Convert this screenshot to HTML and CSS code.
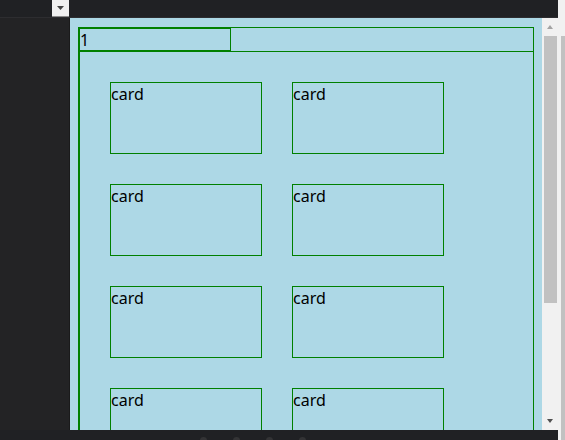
FILE: index.html
```html
<!DOCTYPE html>
<html lang="en">
<head>
    <meta charset="UTF-8">
    <meta name="viewport" content="width=device-width, initial-scale=1.0">
    <title>Preview</title>
    <link rel="stylesheet" href="styles.css">
</head>
<body>

    <div class="app">
        <div class="topbar">
            <div class="menu-btn">
                <svg width="7" height="4" viewBox="0 0 7 4"><polygon points="0,0 7,0 3.5,4" fill="#444"/></svg>
            </div>
        </div>

        <div class="side"></div>

        <div class="preview">
            <div class="frame">
                <div class="tabs">
                    <div class="tab">1</div>
                </div>
                <div class="content">
                    <div class="cards">
                        <div class="card">card</div>
                        <div class="card">card</div>
                        <div class="card">card</div>
                        <div class="card">card</div>
                        <div class="card">card</div>
                        <div class="card">card</div>
                        <div class="card">card</div>
                        <div class="card">card</div>
                        <div class="card">card</div>
                        <div class="card">card</div>
                    </div>
                </div>
            </div>
        </div>

        <div class="vscroll">
            <div class="arrow-btn"><span class="arrow-up"></span></div>
            <div class="thumb"></div>
            <div class="spacer"></div>
            <div class="arrow-btn"><span class="arrow-down"></span></div>
        </div>

        <div class="outer-scroll">
            <div class="outer-thumb"></div>
        </div>

        <div class="bottombar">
            <span class="dot"></span>
            <span class="dot"></span>
            <span class="dot"></span>
            <span class="dot"></span>
        </div>
    </div>

</body>
</html>
```

FILE: styles.css
```css
body {
    margin: 0;
    background-color: #202124;
    font-family: "Noto Sans", "Open Sans", sans-serif;
}
.app {
    display: grid;
    grid-template-columns: 70px 472px 16px 7px;
    grid-template-rows: 18px 412px 10px;
    width: 565px;
    height: 440px;
    overflow: hidden;
}
.topbar {
    grid-column: 1 / 4;
    grid-row: 1;
    display: flex;
    background-color: #202124;
    border-bottom: 1px solid #2d2d30;
}
.menu-btn {
    margin-left: 52px;
    width: 17px;
    height: 16px;
    background-color: #f0f0f0;
    border-bottom: 1px solid #8a8a8a;
    display: flex;
    align-items: center;
    justify-content: center;
}
.side {
    grid-column: 1;
    grid-row: 2;
    background-color: #232325;
    border-right: 1px solid #1a1a1b;
}
.preview {
    grid-column: 2;
    grid-row: 2;
    background-color: #add8e6;
    padding: 9px 8px 0;
    overflow: hidden;
}
.frame {
    border: 1px solid #008000;
    border-bottom: none;
}
.tabs {
    display: flex;
    border-bottom: 1px solid #008000;
}
.tab {
    width: 150px;
    height: 21px;
    border: 1px solid #008000;
    font-size: 16px;
    line-height: 23px;
    color: #000;
    overflow: hidden;
}
.content {
    border-left: 1px solid #008000;
    padding: 30px 0 0 30px;
}
.cards {
    display: grid;
    grid-template-columns: repeat(2, 152px);
    gap: 30px;
}
.card {
    height: 70px;
    border: 1px solid #008000;
    font-size: 16px;
    line-height: 23px;
    color: #000;
}
.vscroll {
    grid-column: 3;
    grid-row: 2;
    background-color: #f1f1f1;
    display: flex;
    flex-direction: column;
}
.arrow-btn {
    height: 18px;
    display: flex;
    align-items: center;
    justify-content: center;
    padding-right: 1px;
}
.arrow-up {
    border-left: 3px solid transparent;
    border-right: 3px solid transparent;
    border-bottom: 4px solid #a3a3a3;
}
.arrow-down {
    border-left: 3px solid transparent;
    border-right: 3px solid transparent;
    border-top: 4px solid #505050;
}
.thumb {
    margin-left: 2px;
    width: 13px;
    height: 267px;
    background-color: #c1c1c1;
}
.spacer {
    flex: 1;
}
.outer-scroll {
    grid-column: 4;
    grid-row: 1 / 4;
    background-color: #f1f1f1;
    padding-top: 36px;
}
.outer-thumb {
    margin-left: 3px;
    height: 100%;
    background-color: #c1c1c1;
}
.bottombar {
    grid-column: 1 / 4;
    grid-row: 3;
    background-color: #202124;
    display: flex;
    gap: 26px;
    padding-left: 200px;
    padding-top: 7px;
}
.dot {
    width: 7px;
    height: 7px;
    border-radius: 50%;
    background-color: #333335;
}
```
